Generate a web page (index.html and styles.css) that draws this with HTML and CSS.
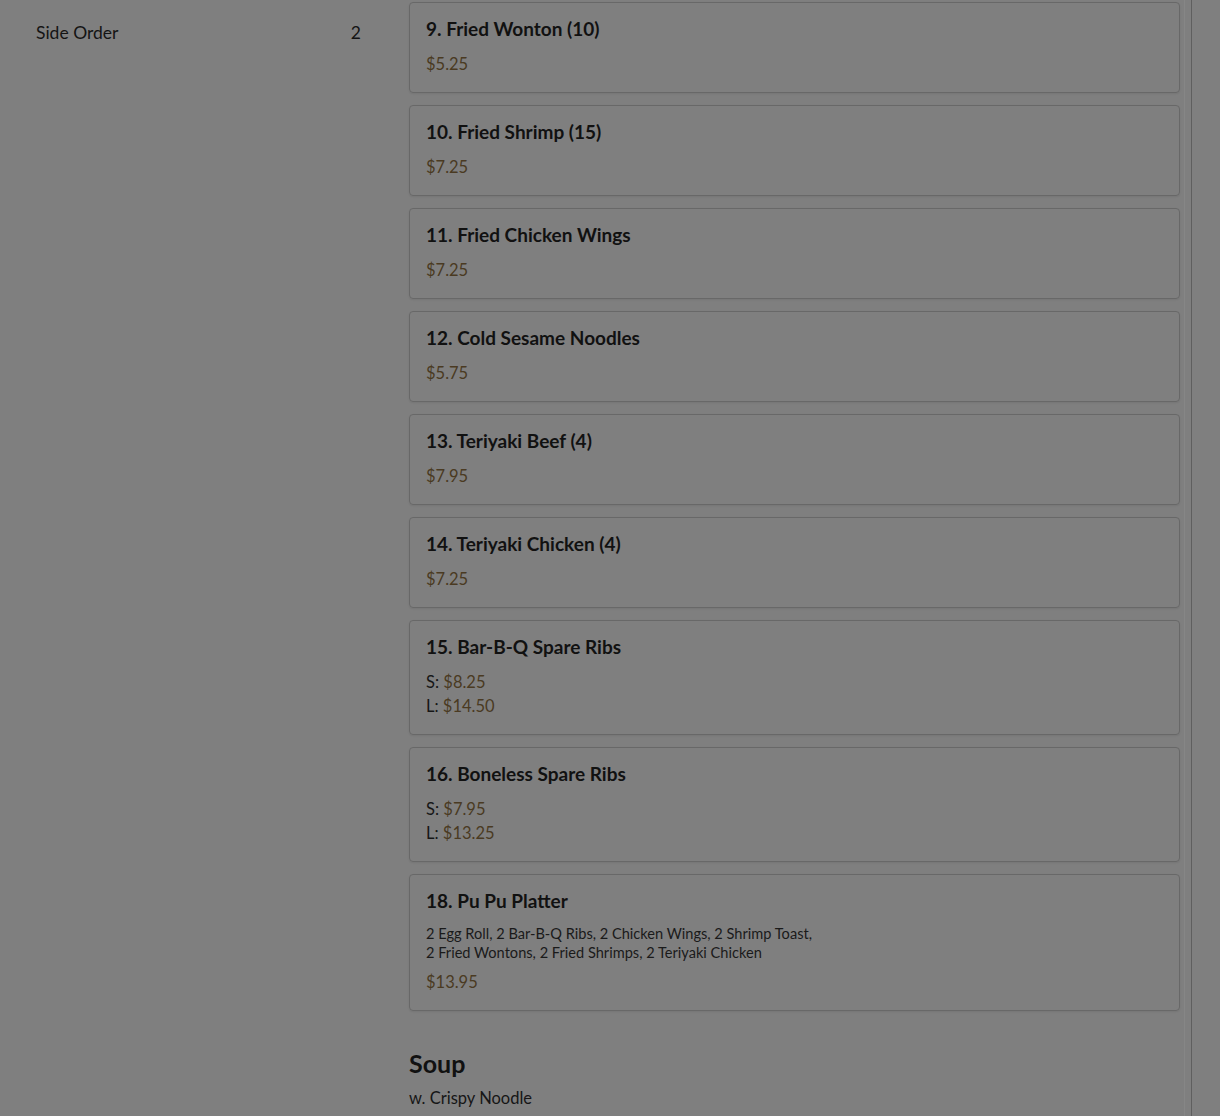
FILE: index.html
```html
<!DOCTYPE html>
<html lang="en">
<head>
<meta charset="utf-8">
<title>Menu</title>
<link rel="stylesheet" href="styles.css">
</head>
<body>
<div class="page">
  <aside class="sidebar">
    <div class="cat-row"><span>Side Order</span><span>2</span></div>
  </aside>
  <main class="menu">
    <div class="card"><h3 class="item-title">9. Fried Wonton (10)</h3><div class="price">$5.25</div></div>
    <div class="card"><h3 class="item-title">10. Fried Shrimp (15)</h3><div class="price">$7.25</div></div>
    <div class="card"><h3 class="item-title">11. Fried Chicken Wings</h3><div class="price">$7.25</div></div>
    <div class="card"><h3 class="item-title">12. Cold Sesame Noodles</h3><div class="price">$5.75</div></div>
    <div class="card"><h3 class="item-title">13. Teriyaki Beef (4)</h3><div class="price">$7.95</div></div>
    <div class="card"><h3 class="item-title">14. Teriyaki Chicken (4)</h3><div class="price">$7.25</div></div>
    <div class="card"><h3 class="item-title">15. Bar-B-Q Spare Ribs</h3><div class="size">S: <span class="price-inline">$8.25</span></div><div class="size">L: <span class="price-inline">$14.50</span></div></div>
    <div class="card"><h3 class="item-title">16. Boneless Spare Ribs</h3><div class="size">S: <span class="price-inline">$7.95</span></div><div class="size">L: <span class="price-inline">$13.25</span></div></div>
    <div class="card"><h3 class="item-title">18. Pu Pu Platter</h3><p class="desc">2 Egg Roll, 2 Bar-B-Q Ribs, 2 Chicken Wings, 2 Shrimp Toast,<br>2 Fried Wontons, 2 Fried Shrimps, 2 Teriyaki Chicken</p><div class="price">$13.95</div></div>
    <section class="section">
      <h2 class="section-title">Soup</h2>
      <div class="section-sub">w. Crispy Noodle</div>
    </section>
  </main>
  <div class="rail"></div>
</div>
</body>
</html>
```
FILE: styles.css
```css
html, body {
  margin: 0;
  padding: 0;
  background: #7f7f7f;
}
body {
  font-family: Lato, "Noto Sans", sans-serif;
  color: #111;
  overflow: hidden;
}
.page {
  display: flex;
  align-items: stretch;
  min-height: 1116px;
}
.sidebar {
  width: 325px;
  padding: 22px 0 0 36px;
  box-sizing: content-box;
  flex-shrink: 0;
}
.cat-row {
  display: flex;
  justify-content: space-between;
  font-size: 17.5px;
  line-height: 22px;
  color: #141414;
}
.menu {
  width: 771px;
  margin-left: 48px;
  padding-top: 2px;
  display: flex;
  flex-direction: column;
  gap: 12px;
  flex-shrink: 0;
}
.card {
  border: 1px solid #686868;
  border-radius: 4px;
  padding: 16px 16px 16px;
  box-shadow: 0 1px 2px rgba(0,0,0,0.08);
}
.item-title {
  margin: 0 0 13px;
  font-size: 19px;
  line-height: 20px;
  font-weight: 700;
  color: #111;
}
.price, .price-inline {
  color: #4a3a22;
}
.price, .size {
  font-size: 16.5px;
  line-height: 24px;
}
.size { color: #161616; }
.desc {
  margin: 13px 0 8px;
  font-size: 14.6px;
  line-height: 19px;
  color: #1a1a1a;
}
.section {
  margin-top: 24px;
}
.section-title {
  margin: 0;
  font-size: 25px;
  line-height: 32px;
  font-weight: 700;
  color: #111;
}
.section-sub {
  margin-top: 8px;
  font-size: 16.5px;
  line-height: 22px;
  color: #161616;
}
.rail {
  margin-left: 4px;
  width: 6px;
  border-left: 1px solid #868686;
  border-right: 1px solid #5f5f5f;
  flex-shrink: 0;
}
```
